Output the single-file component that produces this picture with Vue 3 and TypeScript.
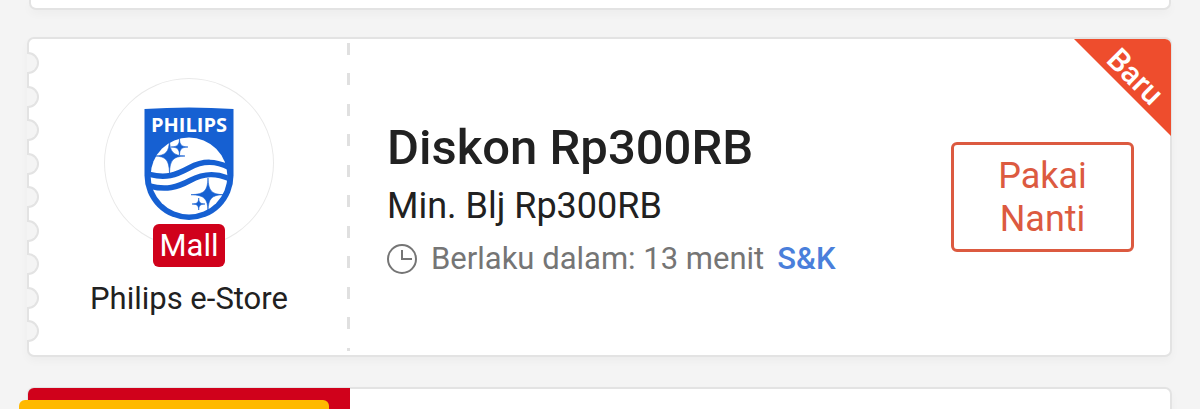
<script setup lang="ts">
interface Voucher {
  store: string
  badge: string
  ribbon: string
  title: string
  minimum: string
  validity: string
  terms: string
  action: string
}

const voucher: Voucher = {
  store: 'Philips e-Store',
  badge: 'Mall',
  ribbon: 'Baru',
  title: 'Diskon Rp300RB',
  minimum: 'Min. Blj Rp300RB',
  validity: 'Berlaku dalam: 13 menit',
  terms: 'S&K',
  action: 'Pakai Nanti',
}

const notchCount = 9
</script>

<template>
  <main class="page">
    <section class="card card-previous"></section>

    <article class="card voucher">
      <div class="notches" aria-hidden="true">
        <span v-for="n in notchCount" :key="n" class="notch"></span>
      </div>

      <div class="store">
        <div class="avatar">
          <svg viewBox="0 0 170 170" role="img" aria-label="Philips">
            <defs>
              <clipPath id="globe"><circle cx="85" cy="98" r="39" /></clipPath>
            </defs>
            <path d="M40.500 31 Q85 28 129.500 31 V97.500 A44.500 44.500 0 0 1 40.500 97.500 Z" fill="#1660d2" />
            <text x="85" y="54" text-anchor="middle" class="wordmark">PHILIPS</text>
            <circle cx="85" cy="98" r="38.400" fill="#fff" />
            <g clip-path="url(#globe)" fill="none" stroke="#1660d2" stroke-width="5.500">
              <path d="M44 96 C62 101 72 97 85 90 C100 82 112 83 126 90" />
              <path d="M44 107.500 C62 113 74 109 86 102.500 C100 95 112 94.500 126 101" />
            </g>
            <g fill="#1660d2" stroke="#1660d2" stroke-width="0.600">
              <path d="M65.500 62 C66 74 69 77.500 81 78 C69 78.500 66 82 65.500 95 C65 82 62 78.500 51 78 C62 77.500 65 74 65.500 62Z" />
              <path d="M75.500 61 C75.800 67 77.500 68.700 84 69 C77.500 69.300 75.800 71 75.500 77 C75.200 71 73.500 69.300 67 69 C73.500 68.700 75.200 67 75.500 61Z" />
              <path d="M104 100 C104.500 113 107.500 116.200 119 116.700 C107.500 117.200 104.500 120.500 104 133 C103.500 120.500 100.500 117.200 87 116.700 C100.500 116.200 103.500 113 104 100Z" />
              <path d="M94.700 120 C95 124.500 96 125.700 101 126 C96 126.300 95 127.500 94.700 132 C94.400 127.500 93.400 126.300 88 126 C93.400 125.700 94.400 124.500 94.700 120Z" />
            </g>
          </svg>
        </div>
        <span class="mall">{{ voucher.badge }}</span>
        <span class="store-name">{{ voucher.store }}</span>
      </div>

      <div class="divider" aria-hidden="true"></div>

      <div class="info">
        <h2 class="title">{{ voucher.title }}</h2>
        <p class="minimum">{{ voucher.minimum }}</p>
        <p class="validity">
          <svg class="clock" viewBox="0 0 30 30" aria-hidden="true">
            <circle cx="15" cy="15" r="14" />
            <path d="M15 6 V15 H25" />
          </svg>
          <span>{{ voucher.validity }}</span>
          <a class="terms" href="#">{{ voucher.terms }}</a>
        </p>
      </div>

      <button class="action" type="button">{{ voucher.action }}</button>

      <div class="ribbon"><span>{{ voucher.ribbon }}</span></div>
    </article>

    <section class="card card-next">
      <div class="next-banner"></div>
      <div class="next-label"></div>
    </section>
  </main>
</template>

<style>
body {
  background: #f4f4f4;
}
</style>

<style scoped>
.page {
  height: 100vh;
  overflow: hidden;
  padding: 0 28px 0 27px;
  box-sizing: border-box;
  background: #f4f4f4;
  font-family: Roboto, "Liberation Sans", sans-serif;
  color: #212121;
}

.card {
  position: relative;
  box-sizing: border-box;
  background: #fff;
  border: 2px solid #e3e3e3;
  border-radius: 7px;
  box-shadow: 0 4px 10px rgba(0, 0, 0, 0.03);
}

.card-previous {
  margin: 0 1px 27px 2px;
  padding-top: 8px;
  border-top: 0;
  border-radius: 0 0 7px 7px;
}

.voucher {
  display: flex;
  align-items: stretch;
}

.notches {
  display: flex;
  flex-direction: column;
  justify-content: space-between;
  width: 12px;
  margin-left: -2px;
  padding: 13px 0;
}

.notch {
  box-sizing: border-box;
  width: 12px;
  height: 22px;
  background: #f4f4f4;
  border: 2px solid #e3e3e3;
  border-left: 0;
  border-radius: 0 11px 11px 0;
}

.store {
  display: flex;
  flex-direction: column;
  align-items: center;
  box-sizing: border-box;
  width: 300px;
  padding: 39px 0 35px;
}

.avatar {
  box-sizing: border-box;
  width: 170px;
  height: 170px;
  border-radius: 50%;
  box-shadow: inset 0 0 0 1px #e9e9e9;
}

.avatar svg {
  display: block;
}

.wordmark {
  font: 700 20px "Open Sans", sans-serif;
  fill: #fff;
}

.mall {
  margin-top: -24px;
  padding: 0 6px;
  border-radius: 6px;
  background: #d0011b;
  color: #fff;
  font-size: 31px;
  line-height: 43px;
  z-index: 1;
}

.store-name {
  margin-top: 10px;
  font-size: 31px;
  line-height: 43px;
}

.divider {
  width: 3px;
  margin: 4px 8px;
  background: repeating-linear-gradient(#e0e0e0 0 12px, transparent 12px 30px, #e0e0e0 30px 42px, transparent 42px 61px);
}

.info {
  flex: 1;
  display: flex;
  flex-direction: column;
  justify-content: center;
  padding: 7px 0 0 29px;
  min-width: 0;
}

.title,
.minimum,
.validity {
  margin: 0;
  white-space: nowrap;
}

.title {
  font-size: 49px;
  font-weight: 500;
  line-height: 60px;
}

.minimum {
  font-size: 36px;
  line-height: 56px;
}

.validity {
  display: flex;
  align-items: center;
  font-size: 31px;
  line-height: 50px;
  color: #757575;
}

.clock {
  width: 30px;
  height: 30px;
  margin-right: 14px;
  fill: none;
  stroke: #757575;
  stroke-width: 2;
}

.terms {
  margin-left: 13px;
  color: #4a7fdb;
  font-weight: 500;
  text-decoration: none;
}

.action {
  align-self: center;
  box-sizing: border-box;
  width: 183px;
  margin-right: 36px;
  padding: 10px 36px 8px;
  border: 3px solid #dc5a40;
  border-radius: 6px;
  background: #fff;
  color: #dc5a40;
  font-family: inherit;
  font-size: 36px;
  line-height: 43px;
  text-align: center;
}

.ribbon {
  position: absolute;
  top: 0;
  right: -1px;
  display: flex;
  align-items: center;
  justify-content: center;
  box-sizing: border-box;
  width: 97px;
  height: 97px;
  padding: 0 0 22px 26px;
  border-top-right-radius: 6px;
  background: #ee4d2d;
  clip-path: polygon(0 0, 100% 0, 100% 100%);
  color: #fff;
  font-size: 31px;
  font-weight: 500;
}

.ribbon span {
  transform: rotate(45deg);
}

.card-next {
  margin-top: 30px;
  height: 200px;
}

.next-banner {
  width: 322px;
  height: 100%;
  margin: -1px 0 0 -1px;
  border-top-left-radius: 6px;
  background: #d0011b;
}

.next-label {
  position: absolute;
  top: 11px;
  left: -10px;
  width: 310px;
  height: 60px;
  border-radius: 6px;
  background: #ffb900;
}
</style>
